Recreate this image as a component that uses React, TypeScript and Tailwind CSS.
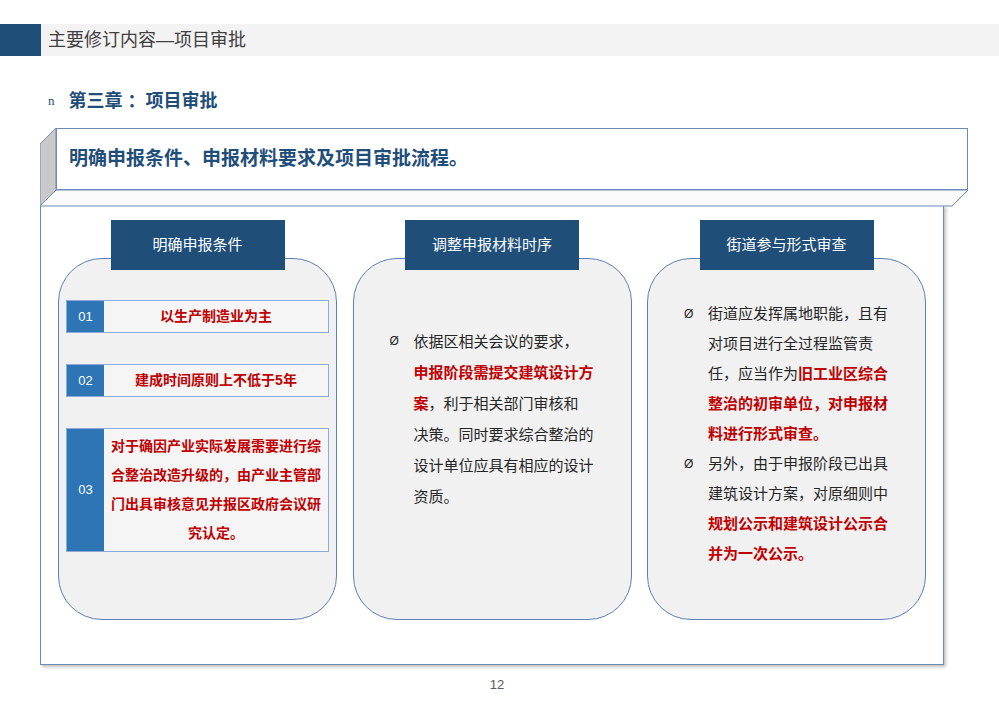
import React from "react";

const font = { fontFamily: '"Liberation Sans", "Noto Sans CJK SC", sans-serif' };

const Card: React.FC<{ title: string; children: React.ReactNode }> = ({ title, children }) => (
  <div className="flex flex-col items-center w-[279px]">
    <div className="relative z-10 w-[174px] h-[50px] bg-[#1f4e79] text-white text-[15px] flex items-center justify-center">
      {title}
    </div>
    <div className="-mt-[12px] w-full h-[362px] rounded-[44px] border border-[#5b7fb8] bg-[#f1f1f1] flex flex-col justify-center">
      {children}
    </div>
  </div>
);

const R: React.FC<{ children: React.ReactNode }> = ({ children }) => (
  <span className="text-[#c00000] font-bold">{children}</span>
);

const Item: React.FC<{ n: string; h: string; children: React.ReactNode }> = ({ n, h, children }) => (
  <div className={`flex mx-[7px] ${h} border border-[#8eaadb]`}>
    <div className="w-[37px] bg-[#2e75b6] text-white text-[13px] flex items-center justify-center">{n}</div>
    <div className="flex-1 bg-[#f5f5f5] flex items-center justify-center text-center text-[#c00000] font-bold text-[14px] leading-[29px] px-[6px]">
      {children}
    </div>
  </div>
);

export default function App() {
  return (
    <div className="w-[999px] h-[706px] bg-white overflow-hidden" style={font}>
      <div className="pt-[24px]">
        <div className="flex h-[32px]">
          <div className="w-[41px] bg-[#1f4e79]" />
          <div className="flex-1 bg-[#f3f3f3] flex items-center pl-[7px] text-[18px] text-[#404040]">
            主要修订内容—项目审批
          </div>
        </div>
      </div>
      <div className="mt-[33px] ml-[48px] flex items-center h-[24px] text-[#1f4e79]">
        <span className="text-[13px] mr-[14px]" style={{ fontFamily: '"Liberation Serif", serif' }}>n</span>
        <span className="text-[18px] font-bold">第三章 ：项目审批</span>
      </div>
      <div className="relative mt-[15px] ml-[40px] w-[928px] h-[62px]">
        <svg className="absolute left-0 top-0" width="928" height="80" viewBox="0 0 928 80">
          <polygon points="0,16 16,0 16,62 0,78" fill="#c9c9c9" stroke="#6d8bb5" />
          <polygon points="16,62 928,62 912,78 0,78" fill="#fafafa" stroke="#6d8bb5" />
        </svg>
        <div className="absolute left-[16px] top-0 w-[912px] h-[62px] border border-[#6d8bb5] bg-white flex items-center pl-[12px] text-[19px] font-bold text-[#1f4e79]">
          明确申报条件、申报材料要求及项目审批流程。
        </div>
      </div>
      <div className="ml-[40px] mt-[15px] w-[904px] h-[460px] border border-[#6d8bb5] shadow-[2px_2px_3px_rgba(0,0,0,0.25)] flex justify-between px-[17px] pt-[14px]">
        <Card title="明确申报条件">
          <div className="flex flex-col gap-[31px] mt-[10px]">
            <Item n="01" h="h-[33px]">以生产制造业为主</Item>
            <Item n="02" h="h-[33px]">建成时间原则上不低于5年</Item>
            <Item n="03" h="h-[124px]">对于确因产业实际发展需要进行综合整治改造升级的，由产业主管部门出具审核意见并报区政府会议研究认定。</Item>
          </div>
          <div className="h-[36px]" />
        </Card>
        <Card title="调整申报材料时序">
          <div className="flex text-[15px] text-[#262626] leading-[31px] pl-[36px] -mt-[40px]">
            <span className="w-[24px] shrink-0 text-[12px]">Ø</span>
            <p className="w-[180px]">依据区相关会议的要求，<R>申报阶段需提交建筑设计方案</R>，利于相关部门审核和决策。同时要求综合整治的设计单位应具有相应的设计资质。</p>
          </div>
        </Card>
        <Card title="街道参与形式审查">
          <div className="flex flex-col text-[15px] text-[#262626] leading-[30px] pl-[36px] -mt-[10px]">
            <div className="flex">
              <span className="w-[24px] shrink-0 text-[12px]">Ø</span>
              <p className="w-[184px]">街道应发挥属地职能，且有对项目进行全过程监管责任，应当作为<R>旧工业区综合整治的初审单位，对申报材料进行形式审查。</R></p>
            </div>
            <div className="flex">
              <span className="w-[24px] shrink-0 text-[12px]">Ø</span>
              <p className="w-[184px]">另外，由于申报阶段已出具建筑设计方案，对原细则中<R>规划公示和建筑设计公示合并为一次公示。</R></p>
            </div>
          </div>
        </Card>
      </div>
      <div className="text-center text-[13px] text-[#595959] mt-[10px] pr-[5px]">12</div>
    </div>
  );
}
